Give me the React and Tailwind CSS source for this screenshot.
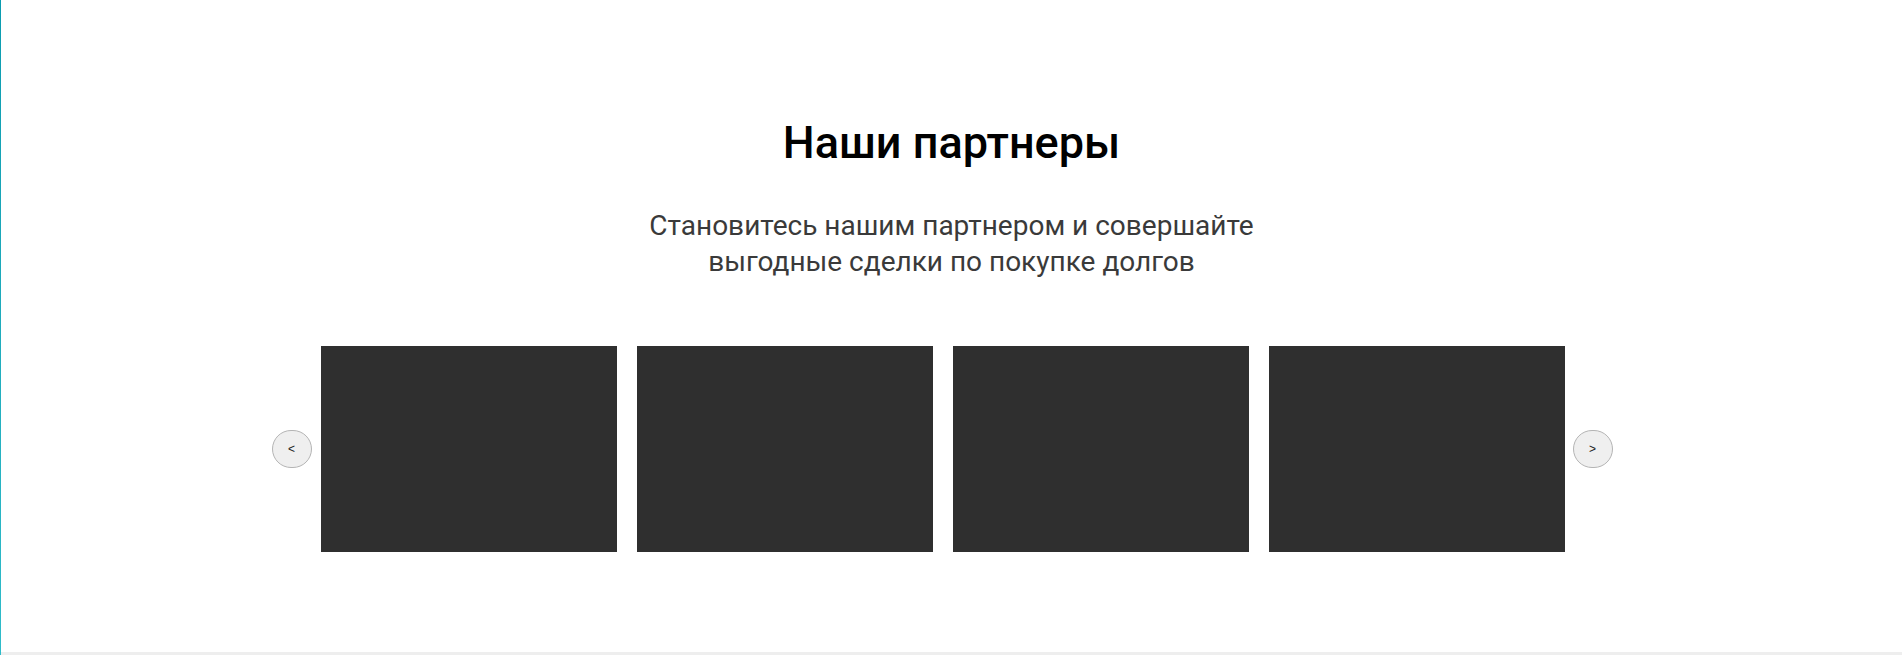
import React from 'react';

const partners = [1, 2, 3, 4];

const ArrowButton = ({ label }) => (
  <button
    type="button"
    className="w-[40px] h-[38px] shrink-0 rounded-full border border-[#b4b4b4] bg-[#efefef] text-[12px] leading-none text-[#222] flex items-center justify-center"
    style={{ fontFamily: '"Liberation Sans", Arial, sans-serif' }}
  >
    {label}
  </button>
);

const App = () => {
  return (
    <div className="h-[655px] w-full flex bg-white" style={{ fontFamily: 'Roboto, "Noto Sans", sans-serif' }}>
      <div className="w-px h-full bg-gradient-to-b from-[#0a9cb0] to-[#2fbcca]" />
      <section className="flex-1 flex flex-col items-center border-b-[3px] border-[#eeeeee]">
        <h2 className="mt-[116px] text-[45px] leading-[53px] font-medium text-black">Наши партнеры</h2>
        <p className="mt-[39px] text-[28px] leading-[36px] text-[#3a3a3a] text-center">
          Становитесь нашим партнером и совершайте
          <br />
          выгодные сделки по покупке долгов
        </p>
        <div className="mt-[66px] w-[1356px] -translate-x-[2px] flex items-center">
          <ArrowButton label="<" />
          <div className="ml-[9px] flex gap-[20px]">
            {partners.map((p) => (
              <div key={p} className="w-[296px] h-[206px] bg-[#2f2f2f]" />
            ))}
          </div>
          <div className="ml-[8px]">
            <ArrowButton label=">" />
          </div>
        </div>
      </section>
    </div>
  );
};

export default App;
